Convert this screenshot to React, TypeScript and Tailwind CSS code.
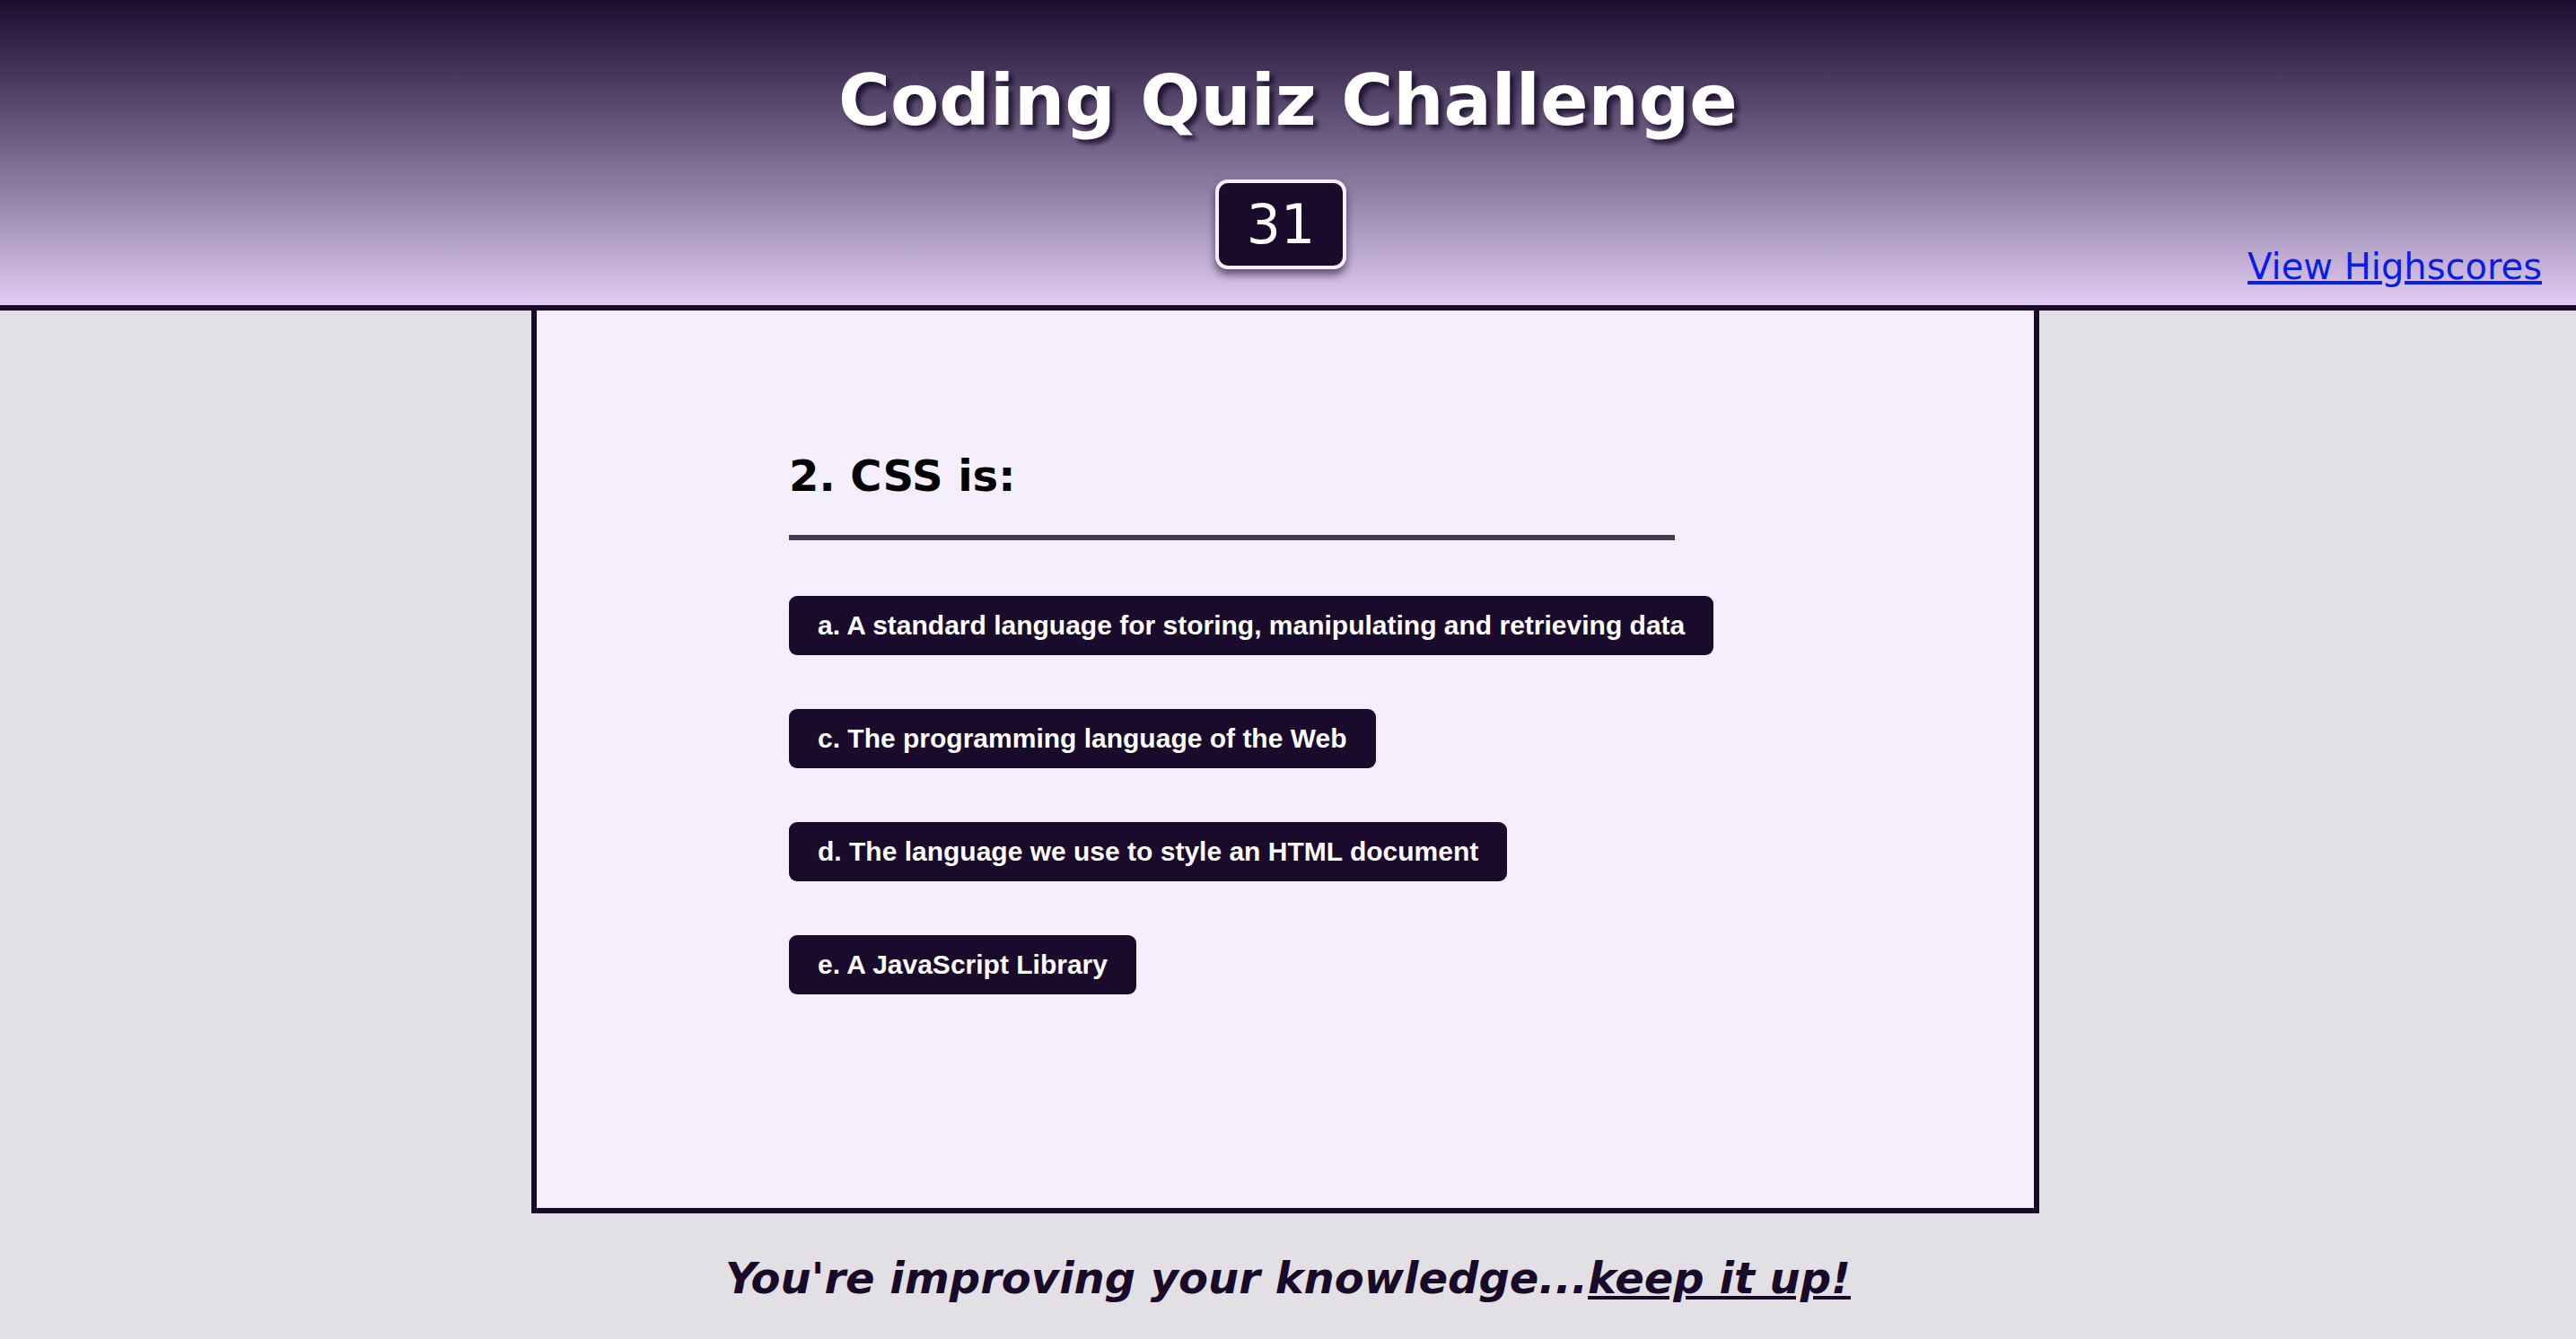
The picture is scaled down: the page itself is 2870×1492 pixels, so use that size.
const answers = [
  'a. A standard language for storing, manipulating and retrieving data',
  'c. The programming language of the Web',
  'd. The language we use to style an HTML document',
  'e. A JavaScript Library',
]

function Header() {
  return (
    <header className="grid h-[346px] grid-cols-[1fr_auto_1fr] border-b-[6px] border-[#1a0a2a] bg-gradient-to-b from-[#1d0e30] to-[#e2cdf3] font-['DejaVu_Sans',Verdana,sans-serif]">
      <div />
      {/* Title + countdown */}
      <div className="flex flex-col items-center pt-[64px]">
        <h1 className="text-[79px] leading-[96px] font-bold text-white [text-shadow:5px_5px_5px_rgba(20,8,35,0.75)]">
          Coding Quiz Challenge
        </h1>
        <div className="mt-[40px] mr-[16px] flex h-[100px] w-[146px] items-center justify-center rounded-[14px] border-4 border-[#f5effd] bg-[#1a0a2b] shadow-[0_6px_10px_rgba(20,8,35,0.6)]">
          <span className="text-[60px] leading-none text-white">31</span>
        </div>
      </div>
      <div className="flex items-end justify-end pr-[38px] pb-[20px]">
        <a href="#" className="text-[40px] leading-[46px] text-[#0a1de6] underline">
          View Highscores
        </a>
      </div>
    </header>
  )
}

function QuestionCard() {
  return (
    <main className="ml-[592px] h-[1006px] w-[1680px] border-x-[6px] border-b-[6px] border-[#1a0a2a] bg-[#f5effd] pt-[156px] pl-[281px]">
      <h2 className="font-['DejaVu_Sans',Verdana,sans-serif] text-[48px] leading-[56px] font-bold text-black">
        2. CSS is:
      </h2>
      <div className="mt-[38px] h-[6px] w-[987px] bg-[#453a4f]" />
      <div className="mt-[62px] flex flex-col items-start gap-[60px]">
        {answers.map((a) => (
          <button
            key={a}
            className="rounded-[9px] bg-[#1a0a2b] px-[32px] py-[16px] font-['Liberation_Sans',Arial,sans-serif] text-[30px] leading-[34px] font-bold text-white"
          >
            {a}
          </button>
        ))}
      </div>
    </main>
  )
}

export default function App() {
  return (
    <div className="min-h-screen bg-[#e3e0e5]">
      <Header />
      <QuestionCard />
      <footer className="mt-[44px] text-center font-['DejaVu_Sans',Verdana,sans-serif] text-[48px] leading-[56px] font-bold italic text-[#1a0a2a]">
        You're improving your knowledge...<span className="underline">keep it up!</span>
      </footer>
    </div>
  )
}
